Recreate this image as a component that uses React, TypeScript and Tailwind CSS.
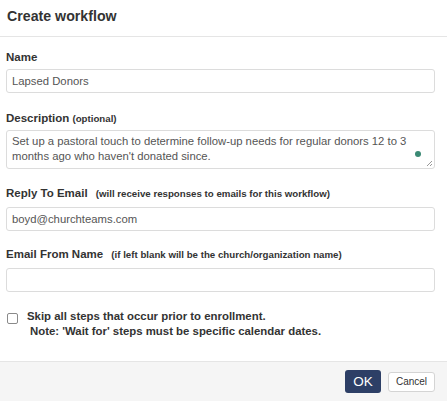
import React from 'react';

const font = { fontFamily: '"Liberation Sans", Arial, sans-serif' };

export default function App() {
  return (
    <div className="w-[447px] h-[401px] bg-white flex flex-col text-[#333]" style={font}>
      <div className="h-[37px] border-b border-[#e5e5e5] px-[7px] flex items-center shrink-0">
        <h1 className="text-[14.2px] font-bold leading-none pb-[4px]">Create workflow</h1>
      </div>

      <div className="flex-1 px-[6px] flex flex-col">
        <label className="mt-[13px] text-[11.5px] font-bold leading-[15px]">Name</label>
        <input
          readOnly
          value="Lapsed Donors"
          className="mt-[4px] h-[24px] w-[429px] border border-[#dcdcdc] rounded-[3px] px-[5px] text-[11.3px] text-[#555] outline-none"
        />

        <label className="mt-[18px] text-[11.5px] font-bold leading-[15px]">
          Description <span className="text-[9.7px]">(optional)</span>
        </label>
        <div className="relative mt-[4px] h-[39px] w-[429px] border border-[#dcdcdc] rounded-[3px] px-[5px] pt-[3px] text-[11.3px] leading-[15px] text-[#555]">
          Set up a pastoral touch to determine follow-up needs for regular donors 12 to 3 months ago who haven't donated since.
          <span className="absolute right-[13px] top-[20px] w-[6px] h-[6px] rounded-full bg-[#3b8a74]" />
          <svg className="absolute right-[1px] bottom-[1px]" width="7" height="7" viewBox="0 0 7 7">
            <path d="M6 1 L1 6 M6 4 L4 6" stroke="#999" strokeWidth="1" />
          </svg>
        </div>

        <label className="mt-[17px] text-[11.5px] font-bold leading-[15px]">
          Reply To Email <span className="text-[9.7px] ml-[5px]">(will receive responses to emails for this workflow)</span>
        </label>
        <input
          readOnly
          value="boyd@churchteams.com"
          className="mt-[6px] h-[24px] w-[429px] border border-[#dcdcdc] rounded-[3px] px-[5px] text-[11.3px] text-[#555] outline-none"
        />

        <label className="mt-[16px] text-[11.5px] font-bold leading-[15px]">
          Email From Name <span className="text-[9.7px] ml-[5px]">(if left blank will be the church/organization name)</span>
        </label>
        <input
          readOnly
          value=""
          className="mt-[6px] h-[24px] w-[429px] border border-[#dcdcdc] rounded-[3px] px-[5px] text-[11.3px] text-[#555] outline-none"
        />

        <div className="mt-[17px] flex items-start gap-[9px] pl-[1px]">
          <span className="mt-[4px] w-[11px] h-[11px] border border-[#8a8a8a] rounded-[2px] bg-white shrink-0" />
          <div className="text-[11.4px] font-bold leading-[15px]">
            <div>Skip all steps that occur prior to enrollment.</div>
            <div className="pl-[3px]">Note: 'Wait for' steps must be specific calendar dates.</div>
          </div>
        </div>
      </div>

      <div className="h-[40px] border-t border-[#e5e5e5] bg-[#f5f5f5] flex items-center justify-end gap-[7px] pr-[12px] shrink-0">
        <button className="w-[36px] h-[23px] rounded-[3px] bg-[#2d3f66] text-white text-[13.5px] leading-none">OK</button>
        <button className="w-[47px] h-[20px] rounded-[3px] border border-[#d4d4d4] bg-white text-[#333] text-[10px] leading-none">Cancel</button>
      </div>
    </div>
  );
}
